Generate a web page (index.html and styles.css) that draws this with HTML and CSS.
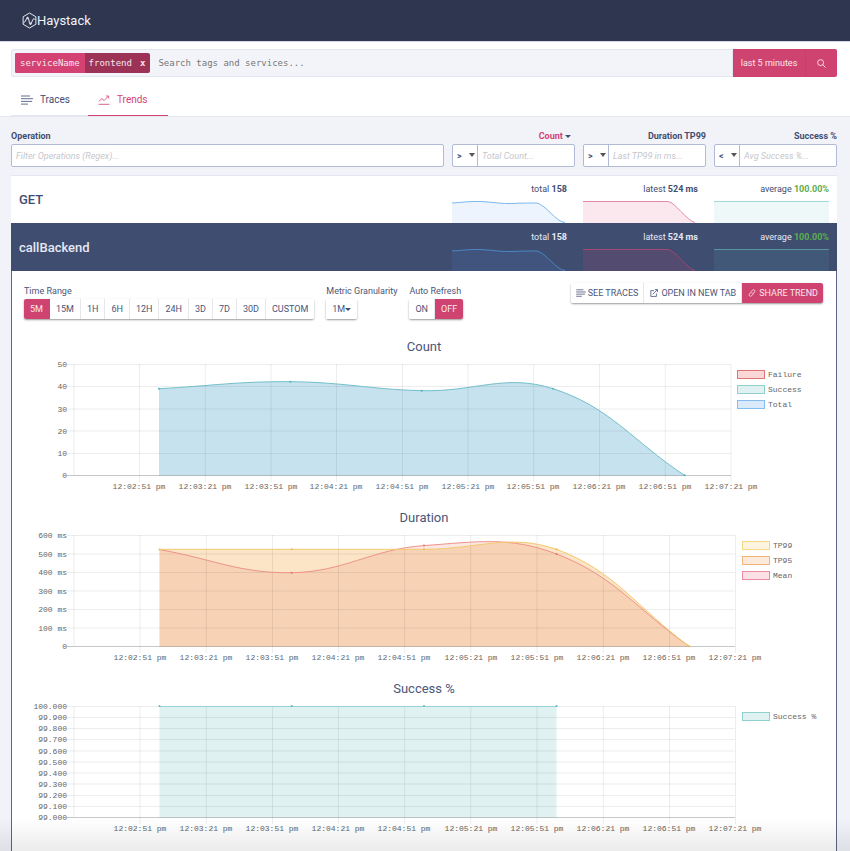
FILE: index.html
```html
<!DOCTYPE html>
<html lang="en">
<head>
<meta charset="utf-8">
<meta name="viewport" content="width=device-width, initial-scale=1">
<title>Haystack</title>
<link rel="stylesheet" href="styles.css">
</head>
<body>
<svg class="defs" aria-hidden="true">
  <symbol id="lines" viewBox="0 0 12 10"><path d="M0 1h9M0 3.7h12M0 6.4h11M0 9.1h7" fill="none" stroke="currentColor"/></symbol>
</svg>
<header class="topbar">
  <a class="brand" href="#">
    <svg class="brand-mark" viewBox="0 0 16 18" fill="none" stroke="currentColor" stroke-linejoin="round"><path d="M8 1l6.800 4v8L8 17l-6.800-4V5z"/><path d="M1.500 11.500l1.500-1 2.500-4.500 1.500 1 1 5 1.500 1 2-5 1.500-1 1.500 1.500"/><circle cx="6" cy="6.300" r=".8"/><circle cx="9" cy="12.500" r=".8"/></svg>
    <span>Haystack</span>
  </a>
</header>
<section class="head">
  <form class="search">
    <div class="search-box">
      <span class="chip"><span class="chip-key">serviceName</span><span class="chip-value">frontend</span><button type="button" class="chip-close" aria-label="Remove filter">x</button></span>
      <input class="search-input" type="text" aria-label="Search" placeholder="Search tags and services...">
    </div>
    <button type="button" class="range">last 5 minutes</button>
    <button type="submit" class="go" aria-label="Run search"><svg viewBox="0 0 10 10" fill="none" stroke="currentColor"><circle cx="4" cy="4" r="3.300"/><path d="M6.400 6.400L9.500 9.500"/></svg></button>
  </form>
  <nav class="tabs">
    <a class="tab" href="#"><svg><use href="#lines"/></svg>Traces</a>
    <a class="tab active" href="#"><svg viewBox="0 0 12 10" fill="none" stroke="currentColor"><path d="M.5 9.300h11M1 6.500l2.700-3 2.500 2L10.500 1M8 1h2.700v2.500"/></svg>Trends</a>
  </nav>
</section>
<main class="content">
<table class="ops">
  <colgroup><col><col class="metric"><col class="metric"><col class="metric"></colgroup>
  <thead>
    <tr>
      <th class="first"><label class="title" for="f-op">Operation</label><div class="filter"><input id="f-op" type="text" placeholder="Filter Operations (Regex)..."></div></th>
      <th><label class="title sorted" for="f-count">Count <i class="caret"></i></label><div class="filter"><span class="pick"><select aria-label="Count comparison"><option>&gt;</option><option>&lt;</option></select></span><input id="f-count" type="text" placeholder="Total Count..."></div></th>
      <th><label class="title" for="f-dur">Duration TP99</label><div class="filter"><span class="pick"><select aria-label="Duration comparison"><option>&gt;</option><option>&lt;</option></select></span><input id="f-dur" type="text" placeholder="Last TP99 in ms..."></div></th>
      <th><label class="title" for="f-suc">Success %</label><div class="filter"><span class="pick"><select aria-label="Success comparison"><option>&lt;</option><option>&gt;</option></select></span><input id="f-suc" type="text" placeholder="Avg Success %..."></div></th>
    </tr>
  </thead>
  <tbody>
    <tr class="op">
      <td class="name">GET</td>
      <td class="stat">total <b>158</b><svg class="spark blue" viewBox="0 0 115 23"><path class="area" d="M0 3C10 2.500 18 1 29 1.500S50 4 60 3.500S78 3 85 3C94 5 104 22 113 22.500V23H0z"/><path class="line" d="M0 3C10 2.500 18 1 29 1.500S50 4 60 3.500S78 3 85 3C94 5 104 22 113 22.500"/></svg></td>
      <td class="stat">latest <b>524 ms</b><svg class="spark pink" viewBox="0 0 115 23"><path class="area" d="M0 1.500H85C92 2 104 21 112 22.500V23H0z"/><path class="line" d="M0 1.500H85C92 2 104 21 112 22.500"/></svg></td>
      <td class="stat">average <b class="ok">100.00%</b><svg class="spark teal" viewBox="0 0 115 23"><path class="area" d="M0 1.500H115V23H0z"/><path class="line" d="M0 1.500H115"/></svg></td>
    </tr>
    <tr class="op open">
      <td class="name">callBackend</td>
      <td class="stat">total <b>158</b><svg class="spark blue" viewBox="0 0 115 23"><path class="area" d="M0 3C10 2.500 18 1 29 1.500S50 4 60 3.500S78 3 85 3C94 5 104 22 113 22.500V23H0z"/><path class="line" d="M0 3C10 2.500 18 1 29 1.500S50 4 60 3.500S78 3 85 3C94 5 104 22 113 22.500"/></svg></td>
      <td class="stat">latest <b>524 ms</b><svg class="spark pink" viewBox="0 0 115 23"><path class="area" d="M0 1.500H85C92 2 104 21 112 22.500V23H0z"/><path class="line" d="M0 1.500H85C92 2 104 21 112 22.500"/></svg></td>
      <td class="stat">average <b class="ok">100.00%</b><svg class="spark teal" viewBox="0 0 115 23"><path class="area" d="M0 1.500H115V23H0z"/><path class="line" d="M0 1.500H115"/></svg></td>
    </tr>
    <tr>
      <td class="detail" colspan="4">
        <div class="controls">
          <div class="group"><span class="caption">Time Range</span>
            <div class="buttons"><button class="on">5M</button><button>15M</button><button>1H</button><button>6H</button><button>12H</button><button>24H</button><button>3D</button><button>7D</button><button>30D</button><button>CUSTOM</button></div></div>
          <div class="group"><span class="caption">Metric Granularity</span>
            <div class="buttons"><button>1M<i class="caret"></i></button></div></div>
          <div class="group"><span class="caption">Auto Refresh</span>
            <div class="buttons"><button>ON</button><button class="on">OFF</button></div></div>
          <div class="buttons actions">
            <button><svg><use href="#lines"/></svg>SEE TRACES</button>
            <button><svg viewBox="0 0 10 10" fill="none" stroke="currentColor"><path d="M5 2H1v7.300h7V5.500M3.500 6.500L9.300.7M6 .7h3.300V4"/></svg>OPEN IN NEW TAB</button>
            <button class="on"><svg viewBox="0 0 10 10" fill="none" stroke="currentColor"><path d="M4 5.500C3 4 4 3 5.500 1.500S9.500 1.500 8.300 3.500L6.500 6M6 4.500C7 6 6 7 4.500 8.500S.5 8.500 1.700 6.500L3.200 4.500"/></svg>SHARE TREND</button>
          </div>
        </div>
        <figure class="chart">
          <figcaption>Count</figcaption>
          <svg viewBox="12 0 824 137">
            <path fill="#c6e2ef" d="M159 30.700C211.500 27.900 237.800 23.300 290.300 23.700C342.800 24.100 369.200 31.300 421.700 32.700C474.200 34.100 505.200 15.300 553 30.700C610.300 49.100 632.100 82.600 684.700 117.500H159z"/>
            <path class="grid" d="M67 6.500H731M67 28.500H731M67 51H731M67 73H731M67 95.500H731M74 6V117M139.500 6V124M205.300 6V124M271 6V124M336.500 6V124M402.500 6V124M468 6V124M533.700 6V124M599.500 6V124M665.300 6V124M731 6V124"/>
            <path class="axis" d="M67 117.500H731"/>
            <path fill="none" stroke="#72bfca" d="M159 30.700C211.500 27.900 237.800 23.300 290.300 23.700C342.800 24.100 369.200 31.300 421.700 32.700C474.200 34.100 505.200 15.300 553 30.700C610.300 49.100 632.100 82.600 684.700 117.500"/>
            <g fill="#4fb3bf"><circle cx="159" cy="30.700" r="1"/><circle cx="290.300" cy="23.700" r="1"/><circle cx="421.700" cy="32.700" r="1"/><circle cx="553" cy="30.700" r="1"/><circle cx="684.700" cy="117.300" r="1"/></g>
            <g class="ylab"><text x="67" y="9">50</text><text x="67" y="31">40</text><text x="67" y="54">30</text><text x="67" y="76">20</text><text x="67" y="98">10</text><text x="67" y="120">0</text></g>
            <g class="xlab"><text x="139" y="131">12:02:51 pm</text><text x="205" y="131">12:03:21 pm</text><text x="271" y="131">12:03:51 pm</text><text x="336" y="131">12:04:21 pm</text><text x="402" y="131">12:04:51 pm</text><text x="468" y="131">12:05:21 pm</text><text x="533" y="131">12:05:51 pm</text><text x="599" y="131">12:06:21 pm</text><text x="665" y="131">12:06:51 pm</text><text x="731" y="131">12:07:21 pm</text></g>
            <g class="keys"><rect x="737.500" y="12.500" width="27" height="8" fill="#fad7d7" stroke="#e37474"/><rect x="737.500" y="27.500" width="27" height="8" fill="#dff1f1" stroke="#8fd0cf"/><rect x="737.500" y="42.500" width="27" height="8" fill="#dbeafb" stroke="#86bdf0"/><text x="768" y="19">Failure</text><text x="768" y="34">Success</text><text x="768" y="49">Total</text></g>
          </svg>
        </figure>
        <figure class="chart">
          <figcaption>Duration</figcaption>
          <svg viewBox="12 0 824 137">
            <path fill="#fbe5c6" d="M159.500 20.300H424C477 20.300 509 4 556.500 20.300C615 41.700 636.500 78.500 689.500 117.500H159.500z"/>
            <path fill="#eb8773" fill-opacity=".2" d="M159.500 20.600C212.500 29.800 238.700 44.500 291.700 43.700C344.700 42.900 370.600 20.400 424 16.600C476.600 12.900 509 6.900 556.500 25C614.800 47.200 636.500 80.400 689.500 117.500H159.500z"/>
            <path class="grid" d="M67 6.500H735M67 25H735M67 43.500H735M67 62H735M67 80.500H735M67 99H735M74 6V117M140 6V124M206.300 6V124M272.500 6V124M338.500 6V124M404.700 6V124M470.800 6V124M537 6V124M603.300 6V124M669.500 6V124M735.500 6V124"/>
            <path class="axis" d="M67 117.500H735"/>
            <path fill="none" stroke="#ef9389" d="M159.500 20.600C212.500 29.800 238.700 44.500 291.700 43.700C344.700 42.900 370.600 20.400 424 16.600C476.600 12.900 509 6.900 556.500 25C614.800 47.200 636.500 80.400 689.500 117.500"/>
            <path fill="none" stroke="#f4cb70" d="M159.500 20.300H424C477 20.300 509 4 556.500 20.300C615 41.700 636.500 78.500 689.500 117.500"/>
            <g fill="#f3b950"><circle cx="159.500" cy="20.500" r="1"/><circle cx="291.700" cy="20.300" r="1"/><circle cx="424" cy="20.300" r="1"/><circle cx="556.500" cy="20.300" r="1"/><circle cx="689.500" cy="117.300" r="1"/></g>
            <g fill="#ea6f72"><circle cx="291.700" cy="43.700" r="1"/><circle cx="424" cy="16.600" r="1"/><circle cx="556.500" cy="25" r="1"/></g>
            <g class="ylab"><text x="67" y="9">600 ms</text><text x="67" y="28">500 ms</text><text x="67" y="46">400 ms</text><text x="67" y="65">300 ms</text><text x="67" y="83">200 ms</text><text x="67" y="102">100 ms</text><text x="67" y="120">0</text></g>
            <g class="xlab"><text x="140" y="131">12:02:51 pm</text><text x="206" y="131">12:03:21 pm</text><text x="272" y="131">12:03:51 pm</text><text x="338" y="131">12:04:21 pm</text><text x="404" y="131">12:04:51 pm</text><text x="471" y="131">12:05:21 pm</text><text x="537" y="131">12:05:51 pm</text><text x="603" y="131">12:06:21 pm</text><text x="669" y="131">12:06:51 pm</text><text x="735" y="131">12:07:21 pm</text></g>
            <g class="keys"><rect x="742.500" y="12.500" width="27" height="8" fill="#fdf3df" stroke="#f6d782"/><rect x="742.500" y="27.500" width="27" height="8" fill="#fcebdc" stroke="#f3b577"/><rect x="742.500" y="42.500" width="27" height="8" fill="#fbe0e6" stroke="#ee8ba4"/><text x="773" y="19">TP99</text><text x="773" y="34">TP95</text><text x="773" y="49">Mean</text></g>
          </svg>
        </figure>
        <figure class="chart">
          <figcaption>Success %</figcaption>
          <svg viewBox="12 0 824 137">
            <path fill="#dff1f1" d="M159.500 6H556.500V117.500H159.500z"/>
            <path class="grid" d="M67 6.500H735M67 17.500H735M67 28.500H735M67 39.500H735M67 51H735M67 62H735M67 73H735M67 84H735M67 95.500H735M67 106.500H735M74 6V117M140 6V124M206.300 6V124M272.500 6V124M338.500 6V124M404.700 6V124M470.800 6V124M537 6V124M603.300 6V124M669.500 6V124M735.500 6V124"/>
            <path class="axis" d="M67 117.500H735"/>
            <path fill="none" stroke="#97d1d4" d="M159.500 6.500H556.500"/>
            <g fill="#5cb9c0"><circle cx="159.500" cy="6" r="1"/><circle cx="291.700" cy="6" r="1"/><circle cx="424" cy="6" r="1"/><circle cx="556.500" cy="6" r="1"/></g>
            <g class="ylab"><text x="67" y="9">100.000</text><text x="67" y="20">99.900</text><text x="67" y="31">99.800</text><text x="67" y="42">99.700</text><text x="67" y="54">99.600</text><text x="67" y="65">99.500</text><text x="67" y="76">99.400</text><text x="67" y="87">99.300</text><text x="67" y="98">99.200</text><text x="67" y="109">99.100</text><text x="67" y="120">99.000</text></g>
            <g class="xlab"><text x="140" y="131">12:02:51 pm</text><text x="206" y="131">12:03:21 pm</text><text x="272" y="131">12:03:51 pm</text><text x="338" y="131">12:04:21 pm</text><text x="404" y="131">12:04:51 pm</text><text x="471" y="131">12:05:21 pm</text><text x="537" y="131">12:05:51 pm</text><text x="603" y="131">12:06:21 pm</text><text x="669" y="131">12:06:51 pm</text><text x="735" y="131">12:07:21 pm</text></g>
            <g class="keys"><rect x="742.500" y="12.500" width="27" height="8" fill="#dff1f1" stroke="#8fd0cf"/><text x="773" y="19">Success %</text></g>
          </svg>
        </figure>
      </td>
    </tr>
  </tbody>
</table>
</main>
</body>
</html>
```
FILE: styles.css
```css
* { box-sizing: border-box; }
body {
  margin: 0;
  min-height: 100vh;
  background: #f2f3f9;
  color: #3f4d71;
  font-family: Roboto, "Liberation Sans", sans-serif;
  font-size: 9px;
  line-height: 14px;
}
/* Fade along the lower edge of the window */
body::after {
  content: "";
  position: fixed;
  inset: auto 0 0;
  height: 32px;
  background: linear-gradient(transparent, rgba(0, 0, 0, .08));
  pointer-events: none;
}
button, input, select { font: inherit; color: inherit; border: 0; margin: 0; border-radius: 0; }
a { color: inherit; text-decoration: none; }
svg { display: block; }
.defs { display: none; }

.topbar {
  height: 41px;
  padding: 0 22px;
  background: #2e3650;
  color: #f2f3f9;
  display: flex;
  align-items: center;
}
.brand { display: flex; align-items: center; font-size: 13px; }
.brand-mark { width: 15px; height: 17px; }

.head {
  height: 76px;
  padding: 7px 13px 0 11px;
  background: #fff;
  border-top: 1px solid #d5d8e6;
  border-bottom: 1px solid #e4e6f2;
}
.search { display: flex; height: 28px; }
.search-box {
  flex: 1;
  display: flex;
  align-items: center;
  padding-left: 3px;
  background: #f3f4f9;
  border: 1px solid #e4e7f1;
  border-radius: 2px 0 0 2px;
  font-family: "DejaVu Sans Mono", monospace;
}
.chip {
  display: flex;
  height: 20px;
  line-height: 20px;
  border-radius: 2px;
  overflow: hidden;
  background: #9c3356;
  color: #f7e6ee;
}
.chip-key { background: #d34272; padding: 0 5px; }
.chip-value { padding: 0 4px; }
.chip-close { background: none; padding: 0 5px 0 4px; font-weight: bold; }
.search-input { flex: 1; min-width: 0; height: 24px; padding: 0 8px; background: none; }
.search-input::placeholder { color: #777; opacity: 1; }
.range, .go { background: #cf4370; color: #fbe7ee; }
.range { width: 72px; padding: 0; }
.go { width: 32px; padding: 0; border-left: 1px solid #b64672; border-radius: 0 2px 2px 0; display: grid; place-items: center; }
.go svg { width: 9px; height: 9px; }

.tabs { display: flex; margin-top: 7px; }
.tab {
  height: 32px;
  width: 77px;
  padding: 0 10px;
  display: flex;
  align-items: center;
  gap: 7px;
  font-size: 10px;
  border-bottom: 1px solid #e4e6ee;
}
.tab svg { width: 12px; height: 10px; opacity: .8; }
.tab.active { width: 80px; color: #d34272; border-bottom: 1px solid #d34272; }

.content { padding: 12px 13px 0 11px; }
.ops { width: 100%; table-layout: fixed; border-collapse: separate; border-spacing: 0; }
.metric { width: 131px; }
.ops th { padding: 0 0 8px 8px; text-align: right; vertical-align: top; font-weight: normal; }
.ops th.first { padding-left: 0; text-align: left; }
.ops td { padding: 0; }
.title { display: block; font-weight: bold; line-height: 15px; }
.sorted { color: #d34272; padding-right: 4px; }
.caret {
  display: inline-block;
  border: 3px solid transparent;
  border-top-color: #3f4d71;
  border-bottom: 0;
  vertical-align: 1px;
}
.filter {
  display: flex;
  height: 23px;
  background: #fff;
  border: 1px solid #b3bad6;
  border-radius: 2px;
}
.filter input { flex: 1; min-width: 0; padding: 0 4px; background: none; }
.filter input::placeholder { color: #c5c7cd; font-style: italic; opacity: 1; }
.pick { position: relative; width: 25px; border-right: 1px solid #b3bad6; }
.pick select { appearance: none; width: 100%; height: 100%; padding: 0 4px; background: none; font-weight: bold; }
.pick::after {
  content: "";
  position: absolute;
  right: 2px;
  top: 8px;
  border: 3px solid transparent;
  border-top: 4px solid #555;
  border-bottom: 0;
  pointer-events: none;
}

.op { background: #fff; }
.op td { border-top: 1px solid #e4e6f2; }
.op .name { padding-left: 8px; font-size: 13px; font-weight: 500; }
.op .stat { padding: 6px 8px 0; text-align: right; vertical-align: top; }
.spark { width: 100%; height: 23px; margin-top: 4px; }
.spark .line { fill: none; stroke-width: 1; }
.blue .area { fill: #4c97e8; fill-opacity: .1; }
.blue .line { stroke: #7ab8ee; }
.pink .area { fill: #d34272; fill-opacity: .12; }
.pink .line { stroke: #e58ba8; }
.teal .area { fill: #60bcb8; fill-opacity: .1; }
.teal .line { stroke: #a5d8d8; }
.ok { color: #5cad50; }
.open { background: #3f4d71; color: #e6e9f5; }
.op.open td { border-top-color: #3f4d71; }
.open .blue .line { stroke: #4b86c6; }
.open .pink .area { fill-opacity: .15; }
.open .pink .line { stroke: #a3486f; }
.open .teal .line { stroke: #5a939f; }

.ops td.detail { background: #fff; border: solid #5b6484; border-width: 0 1px; padding-bottom: 2px; color: #4a567a; }
.controls { display: flex; gap: 12px; padding: 12px 13px 0 12px; height: 65px; align-items: flex-start; }
.group { padding-top: 1px; }
.caption { display: block; line-height: 15px; }
.buttons {
  display: inline-flex;
  height: 20px;
  border-radius: 2px;
  box-shadow: 0 1px 2px rgba(0, 0, 0, .4);
}
.buttons button {
  display: flex;
  align-items: center;
  gap: 2px;
  padding: 0 6px;
  background: #fff;
  border-right: 1px solid #e6e7ec;
}
.buttons button:first-child { border-radius: 2px 0 0 2px; }
.buttons button:last-child { border-right: 0; border-radius: 0 2px 2px 0; }
.buttons button.on { background: #cf4370; color: #fbe7ee; border-color: #cf4370; }
.buttons .caret { margin-left: -2px; }
.buttons.actions { margin-left: auto; }
.buttons.actions button { padding: 0 5px; }
.actions svg { width: 10px; height: 8px; }

.chart { margin: 0 0 12px; }
.chart figcaption { font-size: 13px; line-height: 22px; text-align: center; }
.chart svg { width: 100%; height: auto; }
.chart text { font-family: "Liberation Mono", monospace; font-size: 8px; fill: #666; }
.ylab { text-anchor: end; }
.xlab { text-anchor: middle; }
.grid { fill: none; stroke: #000; stroke-opacity: .07; }
.axis { stroke: #000; stroke-opacity: .22; }
```
